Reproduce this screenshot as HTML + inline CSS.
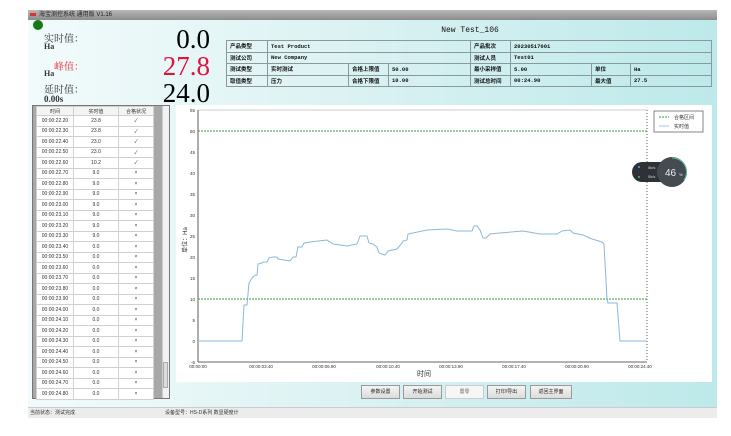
<!DOCTYPE html>
<html><head><meta charset="utf-8"><style>
*{margin:0;padding:0;box-sizing:border-box}
body{width:731px;height:436px;background:#fff;position:relative;overflow:hidden;font-family:"Liberation Sans","Noto Sans CJK SC",sans-serif}
.a{position:absolute}
.win{left:28px;top:10px;width:689px;height:408px;background:linear-gradient(90deg,#f2fbfb 0%,#dff3f4 40%,#bde9ea 100%)}
.title{left:28px;top:10px;width:689px;height:10px;background:linear-gradient(180deg,#b8b8b8,#8c8c8c);font-size:6px;color:#222;line-height:10px;padding-left:10px}
.lbl{font-family:"Liberation Serif","Noto Serif CJK SC",serif;font-size:10px;color:#333}
.big{font-family:"Liberation Serif",serif;font-size:27px;line-height:27px;text-align:right;width:100px}
table{border-collapse:collapse}
.info td{border:1px solid #8a9a9a;font-size:5.5px;font-weight:bold;font-family:"Liberation Mono","Noto Sans CJK SC",monospace;padding-left:3px;height:11.5px;color:#111}
.info{border:1.5px solid #8a9a9a}
.data td{border:1px solid #d0d0d0;font-size:5px;text-align:center;height:10.5px;color:#333;background:#fff}
.data th{border:1px solid #d0d0d0;font-size:5px;font-weight:normal;height:9px;background:#f4f4f4;color:#333}
.ok{color:#4caf50}.no{color:#f06060}
.btn{top:385px;height:14px;border:1px solid #9a9a9a;background:linear-gradient(#f4f4f4,#dcdcdc);font-size:5px;text-align:center;line-height:12px;color:#222}
</style></head><body>
<div class="a win"></div>
<div class="a title"><span style="display:inline-block;width:6px;height:3px;background:#d33;margin-left:-8px;margin-right:3px"></span>海宝测控系统 通用版 V1.16</div>
<div class="a" style="left:33px;top:20px;width:10px;height:10px;border-radius:50%;background:#157a15"></div>
<div class="a lbl" style="left:44px;top:30px">实时值：</div>
<div class="a lbl" style="left:44px;top:42px;font-size:8px;font-weight:bold">Ha</div>
<div class="a lbl" style="left:54px;top:58px;color:#e03040">峰值：</div>
<div class="a lbl" style="left:44px;top:69px;font-size:8px;font-weight:bold">Ha</div>
<div class="a lbl" style="left:44px;top:81px">延时值：</div>
<div class="a lbl" style="left:44px;top:94px;font-size:9px;font-weight:bold">0.00s</div>
<div class="a big" style="left:110px;top:26px">0.0</div>
<div class="a big" style="left:110px;top:53px;color:#e0143c">27.8</div>
<div class="a big" style="left:110px;top:80px">24.0</div>
<div class="a" style="left:410px;top:26px;width:120px;text-align:center;font-family:'Liberation Mono',monospace;font-size:8px;color:#111">New Test_106</div>
<table class="a info" style="left:226px;top:40px;width:486px">
<colgroup><col style="width:41px"><col style="width:81px"><col style="width:40px"><col style="width:82px"><col style="width:40px"><col style="width:81px"><col style="width:39px"><col></colgroup>
<tr><td>产品类型</td><td colspan="3">Test Product</td><td>产品批次</td><td colspan="3">20230517001</td></tr>
<tr><td>测试公司</td><td colspan="3">New Company</td><td>测试人员</td><td colspan="3">Test01</td></tr>
<tr><td>测试类型</td><td>实时测试</td><td>合格上限值</td><td>50.00</td><td>最小采样值</td><td>5.00</td><td>单位</td><td>Ha</td></tr>
<tr><td>取值类型</td><td>压力</td><td>合格下限值</td><td>10.00</td><td>测试总时间</td><td>00:24.90</td><td>最大值</td><td>27.5</td></tr>
</table>
<div class="a" style="left:32px;top:105px;width:138px;height:294px;border:1px solid #777;background:#a8a8a8"></div>
<div class="a" style="left:162px;top:106px;width:7px;height:292px;background:#f2f2f2;border-left:1px solid #ccc"></div>
<div class="a" style="left:163px;top:362px;width:5px;height:26px;background:#dcdcdc;border:1px solid #aaa"></div>
<table class="a data" style="left:36px;top:106px;width:118px">
<colgroup><col style="width:37px"><col style="width:45px"><col></colgroup>
<tr><th>时间</th><th>实时值</th><th>合格状况</th></tr>
<tr><td>00:00:22.20</td><td>23.8</td><td class="ok">✓</td></tr>
<tr><td>00:00:22.30</td><td>23.8</td><td class="ok">✓</td></tr>
<tr><td>00:00:22.40</td><td>23.0</td><td class="ok">✓</td></tr>
<tr><td>00:00:22.50</td><td>23.0</td><td class="ok">✓</td></tr>
<tr><td>00:00:22.60</td><td>10.2</td><td class="ok">✓</td></tr>
<tr><td>00:00:22.70</td><td>9.0</td><td class="no">×</td></tr>
<tr><td>00:00:22.80</td><td>9.0</td><td class="no">×</td></tr>
<tr><td>00:00:22.90</td><td>9.0</td><td class="no">×</td></tr>
<tr><td>00:00:23.00</td><td>9.0</td><td class="no">×</td></tr>
<tr><td>00:00:23.10</td><td>9.0</td><td class="no">×</td></tr>
<tr><td>00:00:23.20</td><td>9.0</td><td class="no">×</td></tr>
<tr><td>00:00:23.30</td><td>9.0</td><td class="no">×</td></tr>
<tr><td>00:00:23.40</td><td>0.0</td><td class="no">×</td></tr>
<tr><td>00:00:23.50</td><td>0.0</td><td class="no">×</td></tr>
<tr><td>00:00:23.60</td><td>0.0</td><td class="no">×</td></tr>
<tr><td>00:00:23.70</td><td>0.0</td><td class="no">×</td></tr>
<tr><td>00:00:23.80</td><td>0.0</td><td class="no">×</td></tr>
<tr><td>00:00:23.90</td><td>0.0</td><td class="no">×</td></tr>
<tr><td>00:00:24.00</td><td>0.0</td><td class="no">×</td></tr>
<tr><td>00:00:24.10</td><td>0.0</td><td class="no">×</td></tr>
<tr><td>00:00:24.20</td><td>0.0</td><td class="no">×</td></tr>
<tr><td>00:00:24.30</td><td>0.0</td><td class="no">×</td></tr>
<tr><td>00:00:24.40</td><td>0.0</td><td class="no">×</td></tr>
<tr><td>00:00:24.50</td><td>0.0</td><td class="no">×</td></tr>
<tr><td>00:00:24.60</td><td>0.0</td><td class="no">×</td></tr>
<tr><td>00:00:24.70</td><td>0.0</td><td class="no">×</td></tr>
<tr><td>00:00:24.80</td><td>0.0</td><td class="no">×</td></tr>
</table>
<div class="a" style="left:176px;top:105px;width:536px;height:277px;background:#fff"></div>
<svg class="a" style="left:0;top:0" width="731" height="436" font-family="Liberation Sans,Noto Sans CJK SC,sans-serif">
<g stroke="#333" stroke-width="0.8" fill="none">
<line x1="198" y1="110" x2="198" y2="362"/><line x1="198" y1="362" x2="647" y2="362"/>
<line x1="647" y1="110" x2="647" y2="362" stroke-dasharray="1,2"/>
<line x1="198" y1="110" x2="647" y2="110" stroke="#bbb"/>
</g>
<g font-size="4.5" fill="#333" text-anchor="end">
<text x="195" y="112">55</text><text x="195" y="133">50</text><text x="195" y="154">45</text><text x="195" y="175">40</text><text x="195" y="196">35</text><text x="195" y="217">30</text><text x="195" y="238">25</text><text x="195" y="259">20</text><text x="195" y="280">15</text><text x="195" y="301">10</text><text x="195" y="322">5</text><text x="195" y="343">0</text><text x="195" y="364">-5</text>
</g>
<g font-size="4.5" fill="#333" text-anchor="middle">
<text x="198" y="368">00:00:00</text><text x="261" y="368">00:00:03.40</text><text x="324" y="368">00:00:06.90</text><text x="388" y="368">00:00:10.40</text><text x="451" y="368">00:00:13.90</text><text x="514" y="368">00:00:17.40</text><text x="577" y="368">00:00:20.90</text><text x="640" y="368">00:00:24.40</text>
</g>
<text x="424" y="376" font-size="7" fill="#333" text-anchor="middle">时间</text>
<text transform="translate(187,240) rotate(-90)" font-size="6" fill="#333" text-anchor="middle">单位：Ha</text>
<line x1="198" y1="131" x2="647" y2="131" stroke="#3a9a3a" stroke-width="0.9" stroke-dasharray="2,1"/>
<line x1="198" y1="299" x2="647" y2="299" stroke="#3a9a3a" stroke-width="0.9" stroke-dasharray="2,1"/>
<polyline fill="none" stroke="#8ab8dc" stroke-width="1" points="198,341 242,341 244,305 247,305 249,283 252,278 254,276 257,275 258,264 262,263 263,262 267,262 269,258 273,257 277,257 278,259 290,261 293,257 296,257 298,247 302,247 304,243 310,242 327,240 333,244 347,246 357,244 360,236 367,236 369,243 373,244 377,247 379,253 385,255 388,251 397,249 402,243 403,241 407,240 408,234 427,230 447,229 457,231 472,231 474,226 477,226 480,230 483,238 486,238 490,234 500,233 523,231 540,234 557,234 562,231 570,230 573,233 583,235 592,239 602,242 604,244 607,299 608,303 617,303 620,341 647,341"/>
<rect x="654" y="111" width="49" height="21" fill="#fff" stroke="#666" stroke-width="0.8"/>
<line x1="659" y1="117" x2="669" y2="117" stroke="#3a9a3a" stroke-dasharray="2,1"/>
<line x1="659" y1="126" x2="669" y2="126" stroke="#9cc8e6"/>
<text x="674" y="119" font-size="5" fill="#333">合格区间</text>
<text x="674" y="128" font-size="5" fill="#333">实时值</text>
<rect x="632" y="162" width="42" height="20" rx="10" fill="#2e3238"/>
<circle cx="639" cy="167" r="1" fill="#4aa8e8"/><circle cx="639" cy="177" r="1" fill="#3cc060"/>
<text x="648" y="169" font-size="4" fill="#ddd">0k/s</text><text x="648" y="178" font-size="4" fill="#ddd">0k/s</text>
<circle cx="672" cy="172" r="15" fill="#464b52"/>
<path d="M672 158 A14 14 0 0 1 684 180" stroke="#5fc0a0" stroke-width="1" fill="none"/>
<text x="665" y="176" font-size="10" fill="#eee">46</text><text x="679" y="176" font-size="4" fill="#eee">%</text>
</svg>
<div class="a btn" style="left:361px;width:39px">参数设置</div>
<div class="a btn" style="left:403px;width:39px">开始测试</div>
<div class="a btn" style="left:445px;width:39px;background:#f6f6f6;border-color:#ccc;color:#666">置零</div>
<div class="a btn" style="left:487px;width:39px">打印/导出</div>
<div class="a btn" style="left:530px;width:42px">返回主界面</div>
<div class="a" style="left:28px;top:407px;width:689px;height:11px;background:#ececec;border-top:1px solid #ccc;font-size:5px;line-height:10px;color:#333"><span style="margin-left:2px">当前状态：测试完成</span><span style="position:absolute;left:137px">设备型号：HS-D系列 数显硬度计</span></div>
</body></html>
